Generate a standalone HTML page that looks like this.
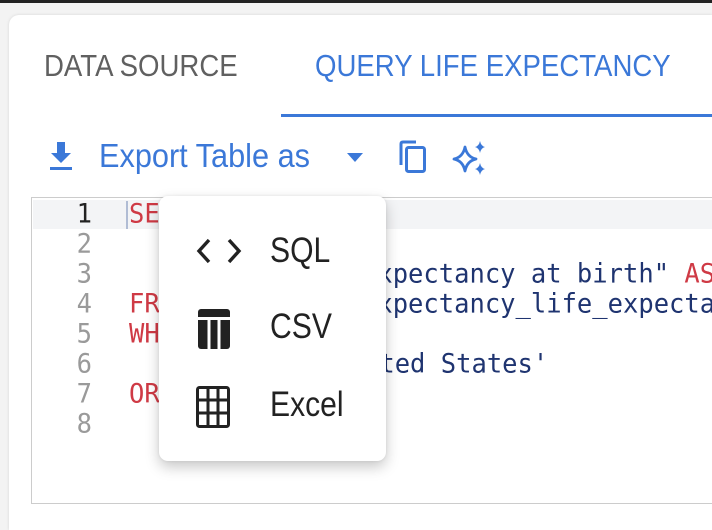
<!DOCTYPE html>
<html style="width:712px;height:530px;overflow:hidden"><head><style>
body{margin:0;width:712px;height:530px;overflow:hidden;background:#f3f3f3;font-family:"Liberation Sans",Roboto,sans-serif}
#w{position:relative;width:712px;height:530px;overflow:hidden}
.top{position:absolute;left:0;top:0;width:712px;height:3px;background:#222}
.card{position:absolute;left:9px;top:15px;width:703px;height:515px;background:#fff;border-radius:10px 0 0 0;box-shadow:0 0 3px rgba(0,0,0,.12)}
.abs{position:absolute;white-space:nowrap}
.tab{font-size:31px;top:48px;transform:scaleX(.89);transform-origin:0 0}
.ul{position:absolute;left:281px;top:114px;width:431px;height:3px;background:#3b78d8}
.editor{position:absolute;left:31px;top:197px;width:681px;height:307px;border:1.5px solid #ccc;border-right:none;background:#fff;box-sizing:border-box;overflow:hidden}
.hl{position:absolute;left:33px;top:200px;width:679px;height:29px;background:#f3f4f6}
.code{font-family:"DejaVu Sans Mono","Liberation Mono",monospace;font-size:25.5px;line-height:30px;transform:scaleY(1.05)}
.ln{color:#9a9a9a;width:60px;text-align:right;left:32px}
.kw{color:#cf3a45}
.st{color:#1f3470}
.clip{position:absolute;left:0;top:0;width:712px;height:530px;overflow:hidden}
.menu{position:absolute;left:159px;top:196px;width:227px;height:265px;background:#fff;border-radius:9px;box-shadow:0 6px 14px rgba(0,0,0,.22),0 0 3px rgba(0,0,0,.08)}
.mi{font-size:35px;color:#222;left:111px;transform:scaleX(.86);transform-origin:0 0}
</style></head><body><div id="w">
<div class="top"></div>
<div class="card"></div>
<div class="abs tab" style="left:44px;color:#606060">DATA SOURCE</div>
<div class="abs tab" style="left:315px;color:#3b78d8">QUERY LIFE EXPECTANCY</div>
<div class="ul"></div>
<svg class="abs" style="left:47px;top:140px" width="28" height="32" viewBox="0 0 28 32"><path d="M10 2h8v11h6L14 23 4 13h6z" fill="#3b78d8"/><rect x="3" y="27" width="22" height="3" fill="#3b78d8"/></svg>
<div class="abs" style="left:99px;top:137px;font-size:33px;color:#3b78d8;transform:scaleX(.93);transform-origin:0 0">Export Table as</div>
<svg class="abs" style="left:345px;top:151px" width="20" height="12"><path d="M2 2h16l-8 9z" fill="#3b78d8"/></svg>
<svg class="abs" style="left:396px;top:139px" width="32" height="36" viewBox="0 0 32 36"><path d="M5 26V5q0-2 2-2h13" stroke="#3b78d8" stroke-width="3" fill="none"/><rect x="10.5" y="8.5" width="18" height="24" rx="2" stroke="#3b78d8" stroke-width="3" fill="none"/></svg>
<svg class="abs" style="left:452px;top:140px" width="38" height="36" viewBox="0 0 38 36"><path d="M13 7 Q15 17 24 19 Q15 21 13 31 Q11 21 2 19 Q11 17 13 7z" stroke="#3b78d8" stroke-width="2.8" fill="none" stroke-linejoin="round"/><path d="M28 1 Q29 6 33 7 Q29 8 28 13 Q27 8 23 7 Q27 6 28 1z" fill="#3b78d8"/><path d="M28 23 Q29 28 33 29 Q29 30 28 35 Q27 30 23 29 Q27 28 28 23z" fill="#3b78d8"/></svg>
<div class="editor"></div>
<div class="hl"></div>
<div class="abs" style="left:126px;top:201px;width:2px;height:28px;background:#b0bcd4"></div>
<div class="clip">
<div class="abs code ln" style="top:199px;color:#222">1</div>
<div class="abs code ln" style="top:229px">2</div>
<div class="abs code ln" style="top:259px">3</div>
<div class="abs code ln" style="top:289px">4</div>
<div class="abs code ln" style="top:319px">5</div>
<div class="abs code ln" style="top:349px">6</div>
<div class="abs code ln" style="top:379px">7</div>
<div class="abs code ln" style="top:409px">8</div>
<div class="abs code kw" style="left:129px;top:199px">SELECT</div>
<div class="abs code st" style="left:362px;top:259px">expectancy at birth" <span class="kw">AS</span></div>
<div class="abs code st" style="left:362px;top:289px">expectancy_life_expecta</div>
<div class="abs code kw" style="left:129px;top:289px">FROM</div>
<div class="abs code kw" style="left:129px;top:319px">WHERE</div>
<div class="abs code st" style="left:364px;top:349px">ited States'</div>
<div class="abs code kw" style="left:129px;top:379px">ORDER</div>
</div>
<div class="menu">
<svg class="abs" style="left:37px;top:40px" width="46" height="30" viewBox="0 0 46 30"><path d="M13 4 3 15l10 11M33 4l10 11-10 11" stroke="#222" stroke-width="3.4" fill="none"/></svg>
<div class="abs mi" style="top:35px">SQL</div>
<svg class="abs" style="left:39px;top:113px" width="32" height="40" viewBox="0 0 32 40"><rect x="0" y="0" width="32" height="40" rx="3" fill="#222"/><rect x="0" y="8" width="32" height="3" fill="#fff"/><rect x="9.5" y="11" width="3" height="29" fill="#fff"/><rect x="19.5" y="11" width="3" height="29" fill="#fff"/></svg>
<div class="abs mi" style="top:111px">CSV</div>
<svg class="abs" style="left:37px;top:190px" width="34" height="42" viewBox="0 0 34 42"><rect x="1.5" y="1.5" width="31" height="39" rx="2" fill="none" stroke="#222" stroke-width="3"/><path d="M12 2v38M22 2v38M2 14h30M2 27h30" stroke="#222" stroke-width="3"/></svg>
<div class="abs mi" style="top:189px">Excel</div>
</div>
</div></body></html>
